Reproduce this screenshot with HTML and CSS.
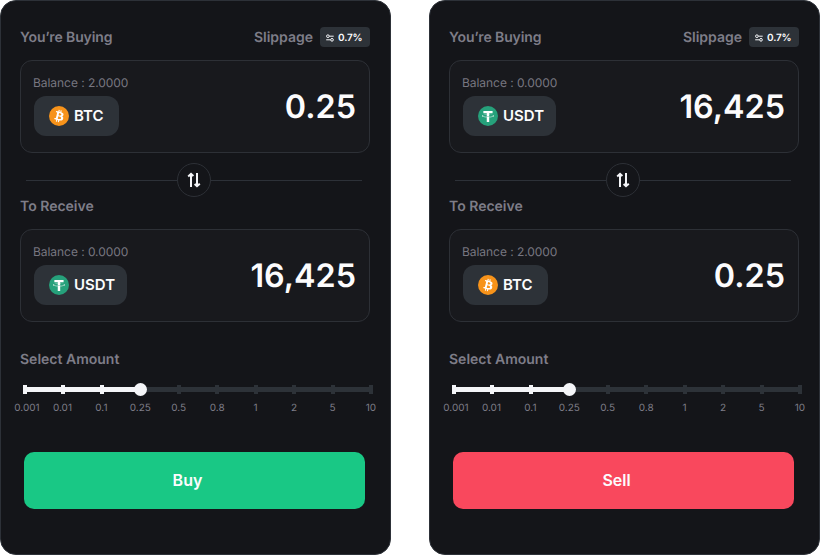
FILE: index.html
```html
<!DOCTYPE html>
<html lang="en">
<head>
<meta charset="utf-8">
<title>Swap</title>
<link rel="stylesheet" href="styles.css">
</head>
<body>
<svg class="defs" width="0" height="0" aria-hidden="true">
  <symbol id="btc" viewBox="0 0 32 32"><circle cx="16" cy="16" r="16" fill="#f7931a"/><path fill="#fff" d="M23.189 14.02c.314-2.096-1.283-3.223-3.465-3.975l.708-2.84-1.728-.43-.69 2.765c-.454-.114-.92-.22-1.385-.326l.695-2.783L15.596 6l-.708 2.839c-.376-.086-.746-.17-1.104-.26l.002-.009-2.384-.595-.46 1.846s1.283.294 1.256.312c.7.175.826.638.805 1.006l-.806 3.235c.048.012.11.03.18.057l-.183-.045-1.13 4.532c-.086.212-.303.531-.793.41.018.025-1.256-.313-1.256-.313l-.858 1.978 2.25.561c.418.105.828.215 1.231.318l-.715 2.872 1.727.43.708-2.84c.472.127.93.245 1.378.357l-.706 2.828 1.728.43.715-2.866c2.948.558 5.164.333 6.097-2.333.752-2.146-.037-3.385-1.588-4.192 1.13-.26 1.98-1.003 2.207-2.538zm-3.95 5.538c-.533 2.147-4.148.986-5.32.695l.95-3.805c1.172.293 4.929.872 4.37 3.11zm.535-5.569c-.487 1.953-3.495.96-4.47.717l.86-3.45c.975.243 4.118.696 3.61 2.733z"/></symbol>
  <symbol id="usdt" viewBox="0 0 32 32"><circle cx="16" cy="16" r="16" fill="#26a17b"/><path fill="#fff" d="M17.922 17.383v-.002c-.11.008-.677.042-1.942.042-1.01 0-1.721-.03-1.971-.042v.003c-3.888-.171-6.79-.848-6.79-1.658 0-.809 2.902-1.486 6.79-1.66v2.644c.254.018.982.061 1.988.061 1.207 0 1.812-.05 1.925-.06v-2.643c3.88.173 6.775.85 6.775 1.658 0 .81-2.895 1.485-6.775 1.657m0-3.59v-2.366h5.414V7.819H8.595v3.608h5.414v2.365c-4.4.202-7.709 1.074-7.709 2.118 0 1.044 3.309 1.915 7.709 2.118v7.582h3.913v-7.584c4.393-.202 7.694-1.073 7.694-2.116 0-1.043-3.301-1.914-7.694-2.117"/></symbol>
  <symbol id="tune" viewBox="0 0 8 8"><g fill="none" stroke="#f4f5f8" stroke-width="1"><circle cx="1.9" cy="2.2" r="1.35"/><path d="M3.3 2.2H7.7M.2 5.8H4.6"/><circle cx="6" cy="5.8" r="1.35"/></g></symbol>
  <symbol id="swap" viewBox="0 0 14 16"><path fill="none" stroke="#f4f5f8" stroke-width="2" d="M4 15V2.2M1.2 4.4 4 1.9l2.4 2.2M10 1v12.8M7.6 11.9 10 14.1l2.8-2.4"/></symbol>
</svg>
<main class="page">
  <section class="card">
    <header class="head"><h2 class="label buying">You’re Buying</h2><span class="label slip">Slippage</span><span class="badge"><svg><use href="#tune"/></svg>0.7%</span></header>
    <div class="box">
      <div class="asset"><p class="balance">Balance : 2.0000</p><button class="coin"><svg><use href="#btc"/></svg>BTC</button></div>
      <strong class="value">0.25</strong>
    </div>
    <div class="divider"><button class="swap"><svg><use href="#swap"/></svg></button></div>
    <h2 class="label receive">To Receive</h2>
    <div class="box">
      <div class="asset"><p class="balance">Balance : 0.0000</p><button class="coin usdt"><svg><use href="#usdt"/></svg>USDT</button></div>
      <strong class="value">16,425</strong>
    </div>
    <h2 class="label select">Select Amount</h2>
    <div class="slider">
      <div class="stop on"><i></i><span>0.001</span></div><div class="stop on"><i></i><span>0.01</span></div><div class="stop on"><i></i><span>0.1</span></div><div class="stop knob"><i></i><span>0.25</span></div><div class="stop"><i></i><span>0.5</span></div><div class="stop"><i></i><span>0.8</span></div><div class="stop"><i></i><span>1</span></div><div class="stop"><i></i><span>2</span></div><div class="stop"><i></i><span>5</span></div><div class="stop"><i></i><span>10</span></div>
    </div>
    <button class="action buy">Buy</button>
  </section>
  <section class="card">
    <header class="head"><h2 class="label buying">You’re Buying</h2><span class="label slip">Slippage</span><span class="badge"><svg><use href="#tune"/></svg>0.7%</span></header>
    <div class="box">
      <div class="asset"><p class="balance">Balance : 0.0000</p><button class="coin usdt"><svg><use href="#usdt"/></svg>USDT</button></div>
      <strong class="value">16,425</strong>
    </div>
    <div class="divider"><button class="swap"><svg><use href="#swap"/></svg></button></div>
    <h2 class="label receive">To Receive</h2>
    <div class="box">
      <div class="asset"><p class="balance">Balance : 2.0000</p><button class="coin"><svg><use href="#btc"/></svg>BTC</button></div>
      <strong class="value">0.25</strong>
    </div>
    <h2 class="label select">Select Amount</h2>
    <div class="slider">
      <div class="stop on"><i></i><span>0.001</span></div><div class="stop on"><i></i><span>0.01</span></div><div class="stop on"><i></i><span>0.1</span></div><div class="stop knob"><i></i><span>0.25</span></div><div class="stop"><i></i><span>0.5</span></div><div class="stop"><i></i><span>0.8</span></div><div class="stop"><i></i><span>1</span></div><div class="stop"><i></i><span>2</span></div><div class="stop"><i></i><span>5</span></div><div class="stop"><i></i><span>10</span></div>
    </div>
    <button class="action sell">Sell</button>
  </section>
</main>
</body>
</html>
```

FILE: styles.css
```css
* { box-sizing: border-box; margin: 0; padding: 0; }
body { background: #fff; font-family: Inter, sans-serif; text-rendering: geometricPrecision; }
button { border: 0; font: inherit; color: inherit; }
.defs { display: block; }
.page { display: flex; justify-content: space-between; width: 820px; height: 555px; }
.card { width: 391px; height: 555px; padding: 26px 20px 0 19px; background: #141519; border: 1px solid #2d3138; border-radius: 16px; }
.head { display: flex; align-items: center; height: 20px; }
.label { height: 20px; padding-top: 1px; font-size: 14px; line-height: 20px; font-weight: 580; color: #7e7d88; }
.buying { letter-spacing: -.1px; }
.slip { margin-left: auto; margin-right: 7px; }
.badge { display: flex; align-items: center; gap: 4px; width: 50px; height: 20px; padding: 1px 0 0 6px; border-radius: 4px; background: #2d3238; color: #fcfcfd; font-size: 10px; font-weight: 580; letter-spacing: -.15px; }
.badge svg { width: 8px; height: 8px; }
.box { display: flex; justify-content: space-between; width: 350px; height: 93px; margin-top: 13px; padding: 14px 13px 0 12px; background: #18191d; border: 1px solid #2d3036; border-radius: 12px; }
.balance { font-size: 12px; line-height: 16px; font-weight: 400; letter-spacing: -.05px; color: #777680; }
.coin { display: flex; align-items: center; gap: 5px; width: 85px; height: 40px; margin: 5px 0 0 1px; padding-left: 15px; border-radius: 12px; background: #2d3238; color: #fcfcfd; font-size: 15px; line-height: 20px; font-weight: 580; }
.coin.usdt { width: 93px; }
.coin svg { flex: none; width: 20px; height: 20px; }
.value { margin-top: 12px; font-size: 32.3px; line-height: 40px; font-weight: 580; color: #fcfcfd; }
.divider { display: flex; align-items: center; width: 336px; height: 34px; margin: 10px 0 0 6px; }
.divider::before, .divider::after { content: ""; height: 1px; background: #2d3138; }
.divider::before { width: 151px; }
.divider::after { flex: 1; }
.swap { display: flex; align-items: center; justify-content: center; width: 34px; height: 34px; border: 1px solid #2d3036; border-radius: 50%; background: #141519; }
.swap svg { width: 14px; height: 16px; }
.receive { margin-top: -1px; }
.select { margin-top: 27px; }
.slider { display: flex; justify-content: space-between; width: 350px; height: 29px; margin: 16px 0 0 3px; background: linear-gradient(#f4f5f8, #f4f5f8) 0 2px / 118px 5px no-repeat, linear-gradient(#2d3238, #2d3238) 0 2px / 350px 5px no-repeat; }
.stop { display: flex; flex-direction: column; align-items: center; width: 4px; }
.stop i { flex: none; width: 4px; height: 9px; background: #2d3238; }
.stop.on i { background: #f4f5f8; }
.stop.knob i { width: 13px; height: 13px; margin: -2px 0; border-radius: 50%; background: #f4f5f8; }
.stop span { margin-top: 6px; font-size: 10px; line-height: 16px; color: #7e7d88; white-space: nowrap; }
.stop.on span { margin-left: -1px; }
.stop.on:first-child span { margin-left: 4px; }
.stop.on:nth-child(2) span { margin-left: -2px; }
.action { display: block; width: 341px; height: 57px; margin: 38px 0 0 4px; padding: 0 14px 1px 0; border-radius: 10px; color: #fcfcfd; font-size: 16px; font-weight: 600; }
.buy { background: #19c885; }
.sell { background: #f9485d; }
```
